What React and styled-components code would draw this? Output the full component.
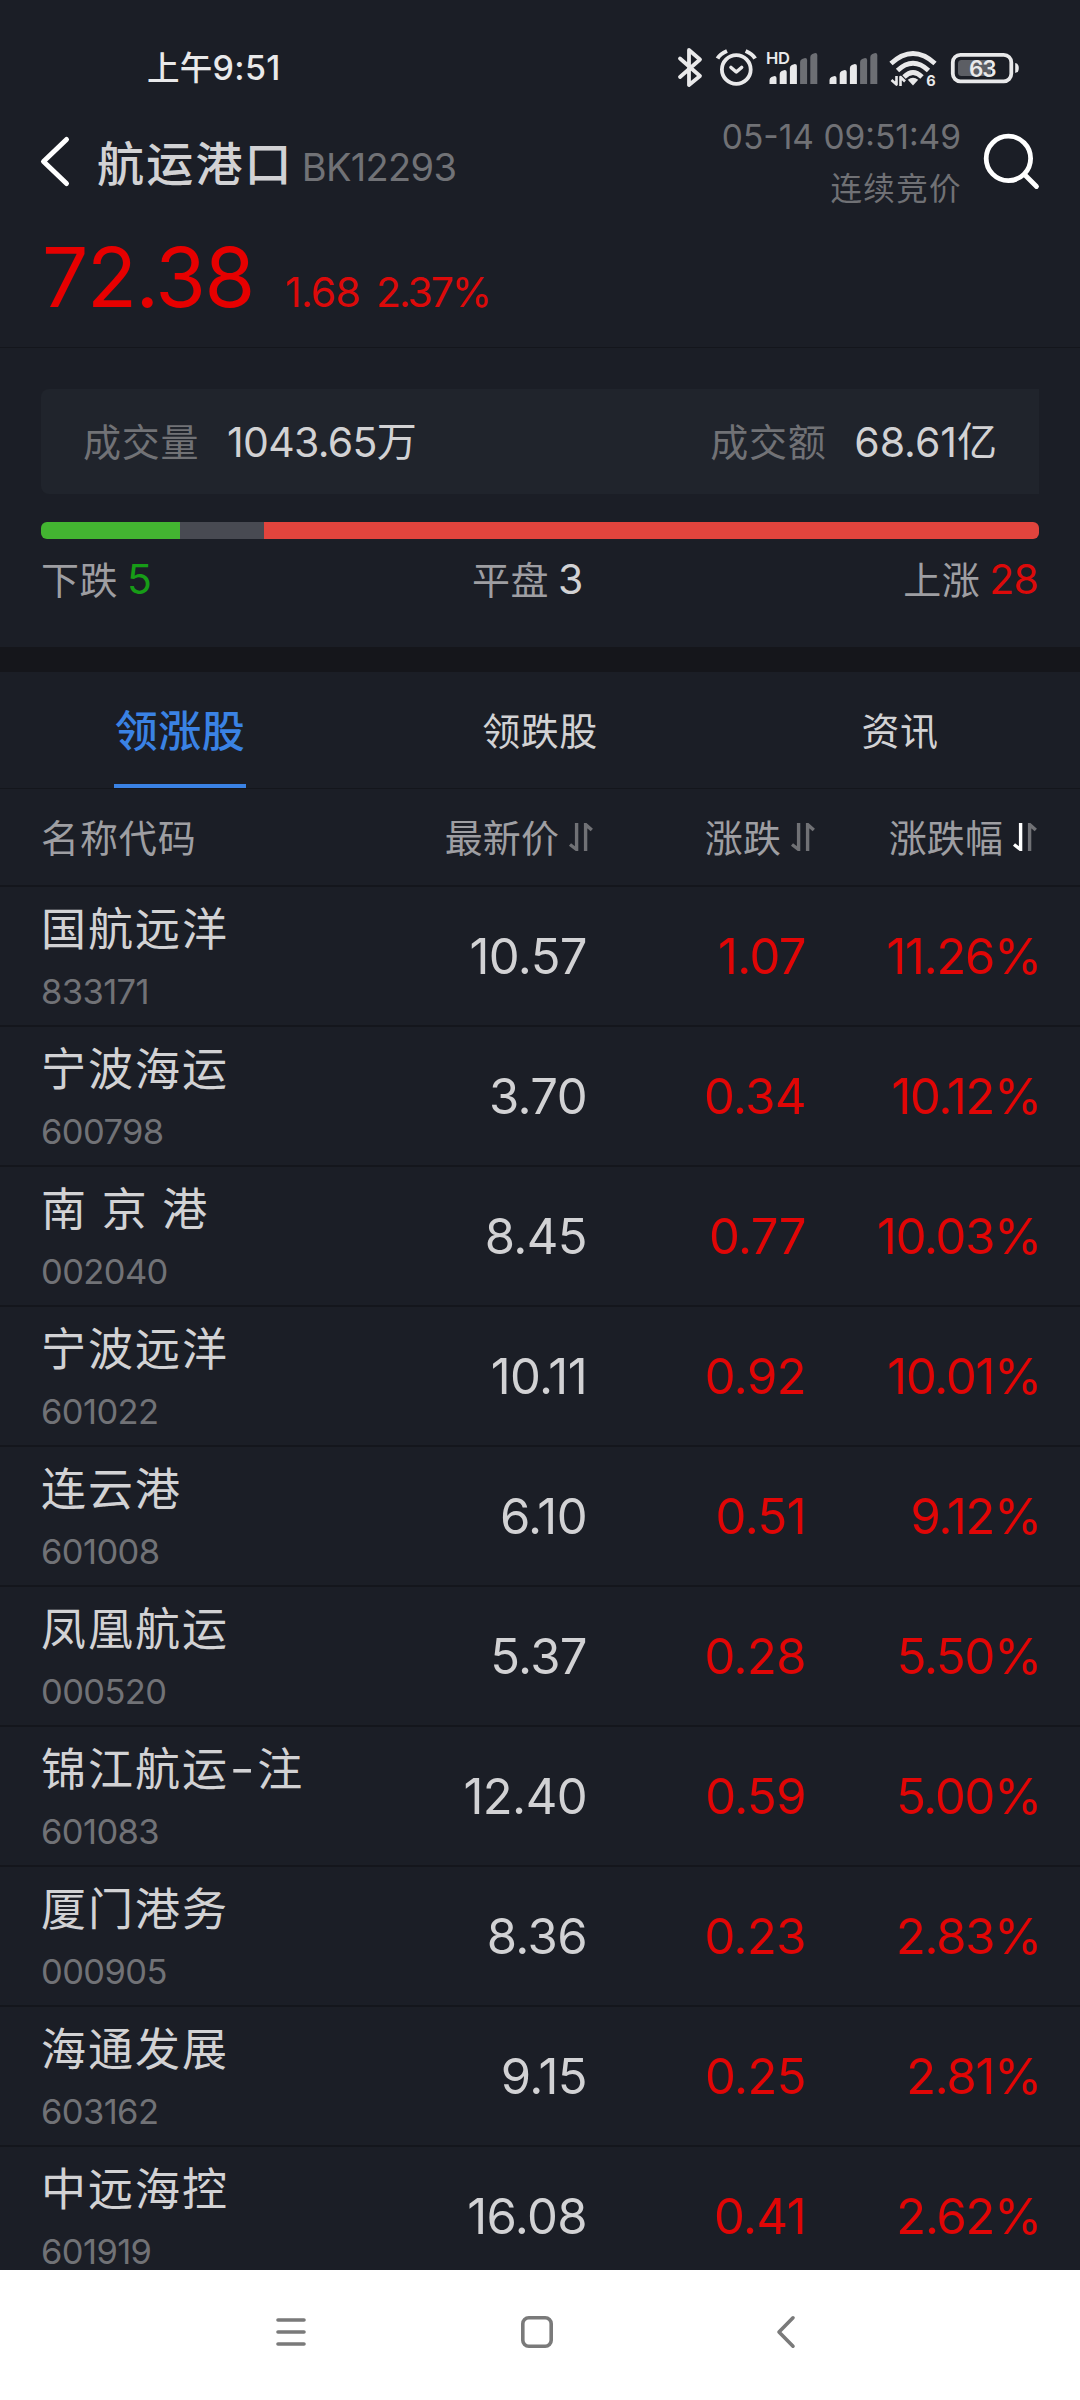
import React from "react";
import styled, { createGlobalStyle } from "styled-components";

const GlobalStyle = createGlobalStyle`
  * {
    box-sizing: border-box;
  }

  body {
    margin: 0;
    background: #1b1e26;
  }
`;

const Screen = styled.div`
  display: flex;
  flex-direction: column;
  width: 1080px;
  height: 2400px;
  overflow: hidden;
  background: #1b1e26;
  color: #d2d2d4;
  font-family: Inter, "Noto Sans CJK SC", sans-serif;
  white-space: nowrap;
`;

const StatusBar = styled.div`
  display: flex;
  flex: none;
  justify-content: space-between;
  align-items: center;
  height: 102px;
  padding: 33px 61px 0 147px;
  color: #e9e9ea;
`;

const Clock = styled.div`
  padding-top: 2px;
  font-size: 34px;
  font-weight: 500;
  line-height: 40px;
  letter-spacing: 0.3px;

  span {
    font-size: 32.5px;
  }
`;

const StatusIcons = styled.svg`
  display: block;
  width: 344px;
  height: 44px;
`;

const Header = styled.div`
  display: flex;
  flex: none;
  align-items: center;
  height: 119px;
  padding: 0 38px 0 38px;
`;

const BackIcon = styled.svg`
  width: 34px;
  height: 56px;
  margin-right: 25px;
`;

const SearchIcon = styled.svg`
  width: 62px;
  height: 62px;
  margin-left: 19px;
`;

const Title = styled.div`
  padding-top: 4px;
  color: #d2d2d4;
  font-size: 47px;
  font-weight: 500;
  line-height: 60px;
  letter-spacing: 2.2px;
`;

const BoardCode = styled.div`
  flex: 1;
  margin-left: 8px;
  padding-top: 11px;
  color: #717276;
  font-size: 38px;
  line-height: 50px;
  letter-spacing: -0.7px;
`;

const Timestamp = styled.div`
  display: flex;
  flex-direction: column;
  align-items: flex-end;
  padding-top: 3px;
  color: #707175;
  font-size: 33.5px;
  line-height: 51px;
`;

const Phase = styled.div`
  margin-right: -1px;
  font-size: 31.5px;
  letter-spacing: 1.4px;
`;

const PriceRow = styled.div`
  display: flex;
  flex: none;
  align-items: baseline;
  height: 127px;
  padding: 17px 0 0 42px;
  border-bottom: 1px solid #14161c;
  color: #e60000;
  line-height: 80px;
`;

const BigPrice = styled.div`
  width: 243px;
  font-size: 82px;
  letter-spacing: -1.5px;
`;

const PriceDelta = styled.div`
  width: ${(props) => props.$width}px;
  color: #dc0a0a;
  font-size: 41px;
  letter-spacing: ${(props) => props.$spacing}px;
`;

const Summary = styled.div`
  display: flex;
  flex: none;
  flex-direction: column;
  height: 299px;
  padding: 41px 41px 0;
`;

const StatsPanel = styled.div`
  display: flex;
  justify-content: space-between;
  align-items: center;
  height: 105px;
  padding: 1px 42px 0 42px;
  border-radius: 8px 0 0 8px;
  background: #20242c;
`;

const Stat = styled.div`
  display: flex;
  align-items: center;
  font-size: 41px;
  line-height: 60px;
  letter-spacing: ${(props) => props.$spacing}px;
`;

const StatLabel = styled.span`
  width: 144px;
  color: #717276;
  font-size: 38px;
  letter-spacing: 0.8px;
`;

const Unit = styled.span`
  font-size: 40px;
`;

const Ratio = styled.div`
  display: flex;
  height: 17px;
  margin-top: 28px;
  overflow: hidden;
  border-radius: 6px;
`;

const RatioPart = styled.div`
  background: ${(props) => props.$color};
`;

const RatioLabels = styled.div`
  display: flex;
  justify-content: space-between;
  margin-top: 15px;
  padding-right: 1px;
  color: #9e9ea2;
  font-size: 38px;
  line-height: 50px;
`;

const RatioLabel = styled.div`
  letter-spacing: 0.5px;
`;

const Count = styled.span`
  margin-left: 9px;
  color: ${(props) => props.$color};
  font-size: 41px;
  letter-spacing: -0.8px;
`;

const Band = styled.div`
  flex: none;
  height: 25px;
  background: #15161b;
`;

const Tabs = styled.div`
  display: grid;
  flex: none;
  grid-template-columns: 1fr 1fr 1fr;
  justify-items: center;
  height: 117px;
  border-bottom: 1px solid #14161c;
`;

const Tab = styled.div`
  height: 116px;
  padding: 2px 1px 0;
  border-bottom: 4px solid ${(props) => (props.$active ? "#3a82e4" : "transparent")};
  color: ${(props) => (props.$active ? "#3a82e4" : "#d2d2d4")};
  font-size: ${(props) => (props.$active ? "43px" : "38px")};
  font-weight: ${(props) => (props.$active ? 500 : 400)};
  line-height: 114px;
  letter-spacing: 0.5px;
`;

const TableHead = styled.div`
  display: grid;
  flex: none;
  grid-template-columns: 300px 254px 222px 222px;
  height: 98px;
  padding: 1px 41px 0;
  border-bottom: 2px solid #14161c;
  color: #9e9ea2;
  font-size: 38px;
  line-height: 96px;
`;

const HeadCell = styled.div`
  display: flex;
  justify-content: ${(props) => (props.$left ? "flex-start" : "flex-end")};
  align-items: center;
  letter-spacing: 0.1px;
`;

const HeadName = styled.span`
  letter-spacing: 0.9px;
`;

const SortIcon = styled.svg`
  width: 28px;
  height: 28px;
  margin: 0 0 2px 8px;
`;

const Row = styled.div`
  display: grid;
  flex: none;
  grid-template-columns: 300px 246px 219px 235px;
  height: 140px;
  padding: 0 39px 0 41px;
  border-bottom: 2px solid #14161c;
`;

const NameCell = styled.div`
  display: flex;
  flex-direction: column;
  padding-top: 8px;
`;

const StockName = styled.div`
  font-size: 45px;
  line-height: 69px;
  letter-spacing: 2px;
  word-spacing: -1px;
`;

const Dash = styled.span`
  font-size: 58px;
  font-weight: 300;
  line-height: 1;
  vertical-align: -3px;
`;

const StockCode = styled.div`
  margin-top: 9px;
  color: #717276;
  font-size: 34.5px;
  line-height: 37px;
  letter-spacing: -0.6px;
`;

const Figure = styled.div`
  color: ${(props) => (props.$up ? "#e00606" : "inherit")};
  font-size: 49px;
  line-height: 139px;
  letter-spacing: ${(props) => props.$spacing}px;
  text-align: right;
`;

const List = styled.div`
  display: flex;
  flex: 1;
  flex-direction: column;
  min-height: 0;
`;

const NavBar = styled.div`
  display: flex;
  flex: none;
  align-items: center;
  height: 130px;
  padding: 0 0 6px 272px;
  background: #fff;
`;

const NavIcon = styled.svg`
  width: 38px;
  height: 46px;
  margin-right: 208px;
  fill: none;
  stroke: #7a7a7a;
  stroke-width: 3.6;
  stroke-linecap: round;
  stroke-linejoin: round;
`;

const breadth = [
  { key: "down", share: 13.9, color: "#43b531" },
  { key: "flat", share: 8.4, color: "#484a52" },
  { key: "up", share: 77.7, color: "#e2443d" },
];

const stocks = [
  ["国航远洋", "833171", "10.57", "1.07", "11.26%"],
  ["宁波海运", "600798", "3.70", "0.34", "10.12%"],
  ["南 京 港", "002040", "8.45", "0.77", "10.03%"],
  ["宁波远洋", "601022", "10.11", "0.92", "10.01%"],
  ["连云港", "601008", "6.10", "0.51", "9.12%"],
  ["凤凰航运", "000520", "5.37", "0.28", "5.50%"],
  ["锦江航运-注", "601083", "12.40", "0.59", "5.00%"],
  ["厦门港务", "000905", "8.36", "0.23", "2.83%"],
  ["海通发展", "603162", "9.15", "0.25", "2.81%"],
  ["中远海控", "601919", "16.08", "0.41", "2.62%"],
];

function Signal({ x }) {
  const heights = [8, 14, 20, 26, 31];
  return (
    <g transform={`translate(${x} 38)`} fill="#e9e9ea">
      {heights.map((h, i) => (
        <path
          key={h}
          opacity={i > 2 ? 0.4 : 1}
          d={`M${i * 10.2} 0V${-(h - 4)}Q${i * 10.2} ${-(h - 2)} ${i * 10.2 + 2} ${-(h - 1)}L${i * 10.2 + 5} ${-h}Q${i * 10.2 + 7} ${-h} ${i * 10.2 + 7} ${-(h - 2)}V0Z`}
        />
      ))}
    </g>
  );
}

function StatusGlyphs() {
  return (
    <StatusIcons viewBox="675 45 344 44">
      <g fill="none" stroke="#e9e9ea" strokeLinecap="round" strokeLinejoin="round">
        <path strokeWidth="3.8" d="M680 57.5L700 75L689 84V49L700 58.5L680 76" />
        <circle cx="736.3" cy="68.5" r="14.4" strokeWidth="3.8" />
        <path strokeWidth="3.6" d="M731 66.5L736.3 71L741.6 66.5" />
        <path strokeWidth="4" strokeLinecap="butt" d="M717.5 57.5Q720 53 727 50M755.1 57.5Q752.6 53 745.6 50" />
        <path strokeWidth="4.8" strokeLinecap="butt" d="M891 62.5Q913 42.5 935 62.5M897.5 69.5Q913 55 928.5 69.5M904 76Q913 67 922 76" />
        <path strokeWidth="2.6" strokeLinecap="butt" d="M891.5 79L896.5 83.5V75M900.5 85V76L905 80.5" />
        <rect x="952.8" y="53.8" width="58.5" height="26.5" rx="7.5" strokeWidth="3.8" />
      </g>
      <path fill="#e9e9ea" d="M907.8 78.8Q913 74.5 918.2 78.8L913 84.5Z" />
      <rect x="958" y="59" width="33" height="16" rx="3.5" fill="#5c5e64" />
      <path fill="#e9e9ea" d="M1015.2 62Q1018.8 62.5 1018.8 67Q1018.8 71.5 1015.2 72Z" />
      <g transform="translate(0 45)">
        <Signal x={769.5} />
        <Signal x={829.5} />
      </g>
      <g fill="#e9e9ea" fontFamily="Inter" fontWeight="600">
        <text x="766" y="63.2" fontSize="16.5" letterSpacing="-0.4">HD</text>
        <text x="926.2" y="85.2" fontSize="14.5" fontWeight="700">6</text>
        <text x="982.3" y="75.6" fontSize="22.5" letterSpacing="-1" textAnchor="middle">63</text>
      </g>
    </StatusIcons>
  );
}

function Sort({ active }) {
  return (
    <SortIcon viewBox="0 0 28 28" fill="none" strokeWidth="3.4">
      <path stroke={active ? "#fff" : "#707175"} d="M3 21.5L9.6 26.5V0" />
      <path stroke="#707175" d="M18.6 28V1.5L24.8 7" />
    </SortIcon>
  );
}

export default function App() {
  return (
    <Screen>
      <GlobalStyle />
      <StatusBar>
        <Clock>
          <span>上午</span>9:51
        </Clock>
        <StatusGlyphs />
      </StatusBar>

      <Header>
        <BackIcon viewBox="38 134 34 56" fill="none" stroke="#fff" strokeWidth="5" strokeLinecap="round" strokeLinejoin="round">
          <path d="M66.5 139.5L43.5 161.5L66.5 183.5" />
        </BackIcon>
        <Title>航运港口</Title>
        <BoardCode>BK12293</BoardCode>
        <Timestamp>
          <div>05-14 09:51:49</div>
          <Phase>连续竞价</Phase>
        </Timestamp>
        <SearchIcon viewBox="980 131 62 62" fill="none" stroke="#fff" strokeWidth="4.8" strokeLinecap="round">
          <circle cx="1008.4" cy="158.4" r="22.2" />
          <path d="M1024.5 174.5L1036.5 186.5" />
        </SearchIcon>
      </Header>

      <PriceRow>
        <BigPrice>72.38</BigPrice>
        <PriceDelta $width={91} $spacing={-0.8}>1.68</PriceDelta>
        <PriceDelta $width={120} $spacing={-2.1}>2.37%</PriceDelta>
      </PriceRow>

      <Summary>
        <StatsPanel>
          <Stat $spacing={-0.7}>
            <StatLabel>成交量</StatLabel>
            1043.65<Unit>万</Unit>
          </Stat>
          <Stat $spacing={0}>
            <StatLabel>成交额</StatLabel>
            68.61<Unit>亿</Unit>
          </Stat>
        </StatsPanel>
        <Ratio>
          {breadth.map(({ key, share, color }) => (
            <RatioPart key={key} $color={color} style={{ width: `${share}%` }} />
          ))}
        </Ratio>
        <RatioLabels>
          <RatioLabel>
            下跌<Count $color="#179c17">5</Count>
          </RatioLabel>
          <RatioLabel>
            平盘<Count $color="#d2d2d4">3</Count>
          </RatioLabel>
          <RatioLabel>
            上涨<Count $color="#dc0a0a">28</Count>
          </RatioLabel>
        </RatioLabels>
      </Summary>

      <Band />

      <Tabs>
        <Tab $active>领涨股</Tab>
        <Tab>领跌股</Tab>
        <Tab>资讯</Tab>
      </Tabs>

      <TableHead>
        <HeadCell $left>
          <HeadName>名称代码</HeadName>
        </HeadCell>
        <HeadCell>
          最新价
          <Sort />
        </HeadCell>
        <HeadCell>
          涨跌
          <Sort />
        </HeadCell>
        <HeadCell>
          涨跌幅
          <Sort active />
        </HeadCell>
      </TableHead>

      <List>
        {stocks.map(([name, code, price, change, percent]) => {
          const [base, suffix] = name.split("-");
          return (
            <Row key={code}>
              <NameCell>
                <StockName>
                  {base}
                  {suffix && <Dash>-</Dash>}
                  {suffix}
                </StockName>
                <StockCode>{code}</StockCode>
              </NameCell>
              <Figure $spacing={-0.6}>{price}</Figure>
              <Figure $up $spacing={-0.6}>
                {change}
              </Figure>
              <Figure $up $spacing={-1.3}>
                {percent}
              </Figure>
            </Row>
          );
        })}
      </List>

      <NavBar>
        <NavIcon viewBox="0 0 38 46">
          <path d="M6 11H32M6 23H32M6 35H32" />
        </NavIcon>
        <NavIcon viewBox="0 0 38 46">
          <rect x="4.8" y="8.8" width="28.4" height="28.4" rx="6" />
        </NavIcon>
        <NavIcon viewBox="0 0 38 46">
          <path d="M29 8.8L15 23L29 37.2" />
        </NavIcon>
      </NavBar>
    </Screen>
  );
}
